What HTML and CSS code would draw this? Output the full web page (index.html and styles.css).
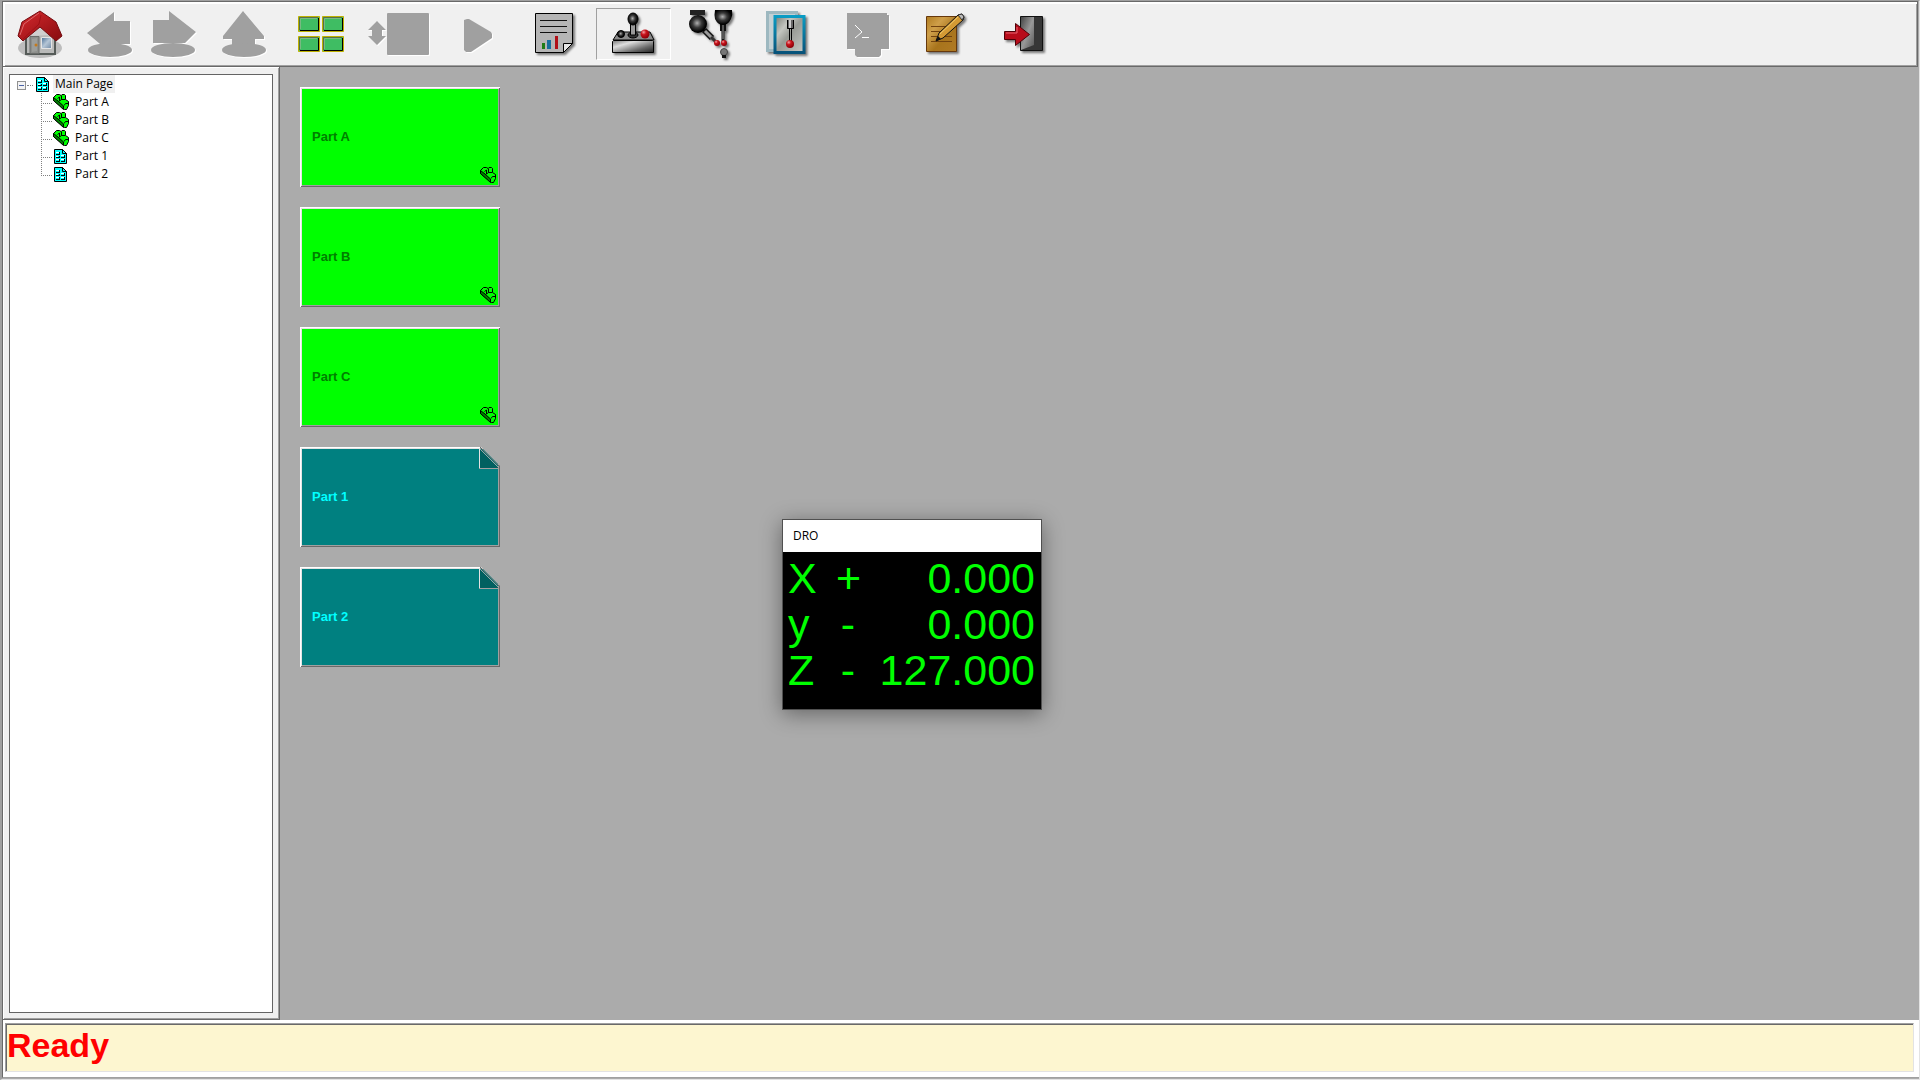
FILE: index.html
```
<!DOCTYPE html>
<html lang="en">

<head>
    <meta charset="UTF-8">
    <meta name="viewport" content="width=device-width, initial-scale=1.0">
    <title>Main Page</title>
    <link rel="stylesheet" href="styles.css">
</head>

<body>
    <!-- shared icons and gradients -->
    <svg class="defs" aria-hidden="true">
        <defs>
            <linearGradient id="roof" x1="0" y1="0" x2="1" y2="1">
                <stop offset="0" stop-color="#d82a2e" />
                <stop offset="1" stop-color="#860b0f" />
            </linearGradient>
            <linearGradient id="glass" x1="0" y1="0" x2="1" y2="1">
                <stop offset="0" stop-color="#4a6f96" />
                <stop offset="0.5" stop-color="#b5c6d6" />
                <stop offset="1" stop-color="#7089a4" />
            </linearGradient>
            <linearGradient id="metal" x1="0" y1="0" x2="1" y2="1">
                <stop offset="0" stop-color="#777" />
                <stop offset="0.3" stop-color="#ddd" />
                <stop offset="0.7" stop-color="#666" />
                <stop offset="1" stop-color="#222" />
            </linearGradient>
            <linearGradient id="panel" x1="0" y1="0" x2="1" y2="1">
                <stop offset="0" stop-color="#777b74" />
                <stop offset="0.3" stop-color="#c4c6c0" />
                <stop offset="0.5" stop-color="#989b95" />
                <stop offset="1" stop-color="#c8cac6" />
            </linearGradient>
            <linearGradient id="blue" x1="0" y1="0" x2="0" y2="1">
                <stop offset="0" stop-color="#0a9cc4" />
                <stop offset="1" stop-color="#07537a" />
            </linearGradient>
            <linearGradient id="gold" x1="0" y1="0" x2="1" y2="1">
                <stop offset="0" stop-color="#b07c20" />
                <stop offset="0.3" stop-color="#cf9f4a" />
                <stop offset="0.6" stop-color="#a8741c" />
                <stop offset="1" stop-color="#b07a24" />
            </linearGradient>
            <linearGradient id="door" x1="0" y1="0" x2="1" y2="1">
                <stop offset="0" stop-color="#444" />
                <stop offset="0.5" stop-color="#999" />
                <stop offset="1" stop-color="#555" />
            </linearGradient>
            <radialGradient id="ball" cx="0.45" cy="0.45" r="0.5">
                <stop offset="0" stop-color="#b0b0b0" />
                <stop offset="0.5" stop-color="#3a3a3a" />
                <stop offset="1" stop-color="#000" />
            </radialGradient>
            <radialGradient id="red" cx="0.35" cy="0.3" r="0.7">
                <stop offset="0" stop-color="#f4a0a4" />
                <stop offset="0.4" stop-color="#c8141c" />
                <stop offset="1" stop-color="#8c0008" />
            </radialGradient>
        </defs>
        <symbol id="page-icon" viewBox="0 0 13 15">
            <path d="M.5 .5h8l4 4v10h-12z" fill="#0ff" stroke="#000" />
            <path d="M8.500 .5v4h4z" fill="#0ff" stroke="#000" />
            <path d="M2 3h4v3H2zM2 7h4v2H2zM2 10h4v3H2zM7 6h4v3H7zM7 10h4v3H7z" fill="#000" />
            <path d="M2 3h3v2H2zM2 7h3v1H2zM2 10h3v2H2zM7 6h3v2H7zM7 10h3v2H7z" fill="#0ff" />
            <path d="M2 3h3v1H2zM2 7h2v1H2zM2 10h3v1H2zM7 6h3v1H7zM7 10h3v1H7z" fill="#fff" />
        </symbol>
        <symbol id="part-icon" viewBox="0 0 16 16">
            <path d="M.5 3.500l3-3h3l1.500 1 1-1h2.500l1 1v4l3 2v4l-2 4h-2L.5 6.500z" fill="#0f0" stroke="#000" />
            <path d="M.5 3.500L5 7l5.500 5v3.500L.5 6.500z" fill="#008000" stroke="#000" />
            <path d="M4.500 4.500l2-1.500v4M8.500 1.500v4l-2 1.500M8.500 5.500h3.500M11 11.500l1.500-2h2.500" fill="none" stroke="#000" />
        </symbol>
    </svg>

    <header class="toolbar">
        <nav class="nav-group">
            <button type="button" class="nav-btn" aria-label="Home">
                <svg viewBox="0 0 61 48">
                    <ellipse cx="30" cy="38" rx="22" ry="10" fill="#bdbdbd" />
                    <path d="M16 24L30 12l15 12v20H16z" fill="#b9bab9" stroke="#555b58" stroke-width="2" />
                    <path d="M19 26L30 16l11 9z" fill="#cfcfcf" />
                    <path d="M20 26.500h9v17h-9z" fill="#8d8f8c" stroke="#6a6c6a" />
                    <path d="M22 29l5-1v13l-5 1z" fill="#9c9e9b" />
                    <circle cx="26" cy="35" r="1.500" fill="#c47a1c" />
                    <path d="M31.500 27.500h10v11h-10z" fill="url(#glass)" stroke="#e4e4e4" />
                    <path d="M30 1l16 11 6 14-6 5L30 17 13 31l-5-5 4-14z" fill="url(#roof)" stroke="#740b10" stroke-linejoin="round" />
                    <path d="M29 3L14 14l-4 11" fill="none" stroke="#dc676a" />
                    <path d="M31 5l-2 9L13 29" fill="none" stroke="#a01015" />
                </svg>
            </button>
            <button type="button" class="nav-btn" aria-label="Back" disabled>
                <svg viewBox="0 0 61 48">
                    <path d="M7 23L34 2v9h16v23H20z" />
                    <ellipse cx="30" cy="40" rx="22" ry="7" />
                </svg>
            </button>
            <button type="button" class="nav-btn" aria-label="Forward" disabled>
                <svg viewBox="0 0 61 48">
                    <path d="M46 22L19 1v9H3v23h32z" />
                    <ellipse cx="23" cy="40" rx="22" ry="7" />
                </svg>
            </button>
            <button type="button" class="nav-btn" aria-label="Up" disabled>
                <svg viewBox="0 0 61 48">
                    <path d="M23 1L44 26v3h-9v8H12v-8H3v-3z" />
                    <ellipse cx="24" cy="40" rx="22" ry="7" />
                </svg>
            </button>
        </nav>
        <div class="tool-group">
            <button type="button" class="tool-btn" aria-label="Tile view">
                <svg viewBox="0 0 61 48">
                    <g fill="#3fbd63" stroke="#beb100">
                        <path d="M7.500 6.500h21v15h-21zM31.500 6.500h21v15h-21zM7.500 26.500h21v15h-21zM31.500 26.500h21v15h-21z" />
                    </g>
                    <path d="M8.500 20V7.500H27M32.500 20V7.500H51M8.500 40V27.500H27M32.500 40V27.500H51" fill="none" stroke="#55714b" />
                    <path d="M9.500 19V8.500H26M33.500 19V8.500H50M9.500 39V28.500H26M33.500 39V28.500H50" fill="none" stroke="#79b982" />
                    <path d="M9 20.500h18.500V8M33 20.500h18.500V8M9 40.500h18.500V28M33 40.500h18.500V28" fill="none" stroke="#000" />
                </svg>
            </button>
            <button type="button" class="tool-btn" aria-label="Resize" disabled>
                <svg viewBox="0 0 61 48">
                    <path d="M8 11l9 9h-4v6h4l-9 9-9-9h4v-6h-4z" />
                    <rect x="18" y="3" width="42" height="42" rx="1" />
                </svg>
            </button>
            <button type="button" class="tool-btn" aria-label="Run" disabled>
                <svg viewBox="0 0 61 48">
                    <path d="M17 10l3-1h2l22 13 1 2v4L24 42h-5l-2-2z" />
                </svg>
            </button>
            <button type="button" class="tool-btn" aria-label="Report">
                <svg class="shadow" viewBox="0 0 61 48">
                    <path d="M10.500 3.500h37v30l-9 9h-28z" fill="#b5b5b5" stroke="#000" />
                    <path d="M15 10.500h27M15 16.500h27M15 22.500h27" stroke="#111" />
                    <path d="M38.500 42.500v-9h9z" fill="#e5e5e5" stroke="#000" />
                    <path d="M17 33h3v6h-3z" fill="#1f7c16" />
                    <path d="M22 30h4v9h-4z" fill="#176f9d" />
                    <path d="M30 26h3v13h-3z" fill="#b01018" />
                </svg>
            </button>
            <button type="button" class="tool-btn pressed" aria-label="Joystick" aria-pressed="true">
                <svg class="shadow" viewBox="0 0 61 48">
                    <path d="M15 22h32l4 8H10z" fill="#8a8a8a" stroke="#000" />
                    <path d="M9.500 31.500l1-1h39l1 1v11h-41z" fill="url(#metal)" stroke="#000" />
                    <ellipse cx="30" cy="25" rx="5" ry="3" fill="#333" stroke="#000" />
                    <path d="M27.500 13h5v12h-5z" fill="#999" stroke="#000" />
                    <ellipse cx="30" cy="9" rx="5" ry="6" fill="url(#ball)" stroke="#000" />
                    <circle cx="18" cy="24" r="3.500" fill="url(#ball)" stroke="#000" />
                    <circle cx="42" cy="24" r="4.500" fill="url(#red)" />
                </svg>
            </button>
            <button type="button" class="tool-btn" aria-label="Probes">
                <svg class="shadow" viewBox="0 0 61 48">
                    <path d="M9 0h15v5H9z" fill="#222" />
                    <path d="M23 20l8 8" stroke="#111" stroke-width="6" />
                    <path d="M24 21l7 7" stroke="#999" stroke-width="3" />
                    <path d="M30 27l6 6" stroke="#333" stroke-width="3" />
                    <path d="M42 12v20" stroke="#111" stroke-width="3" />
                    <path d="M42 14v7" stroke="#111" stroke-width="6" />
                    <path d="M42 14v15" stroke="#999" />
                    <circle cx="17" cy="14" r="9" fill="url(#ball)" />
                    <path d="M34 0h17q1 5-1 9-3 6-8 6t-8-6Q33 5 34 0z" fill="url(#ball)" />
                    <circle cx="36" cy="33" r="3" fill="url(#red)" />
                    <circle cx="43" cy="33" r="3" fill="url(#red)" />
                    <circle cx="43" cy="42" r="3.500" fill="#777" stroke="#444" />
                    <path d="M41 45h4v3h-4z" fill="#111" />
                </svg>
            </button>
            <button type="button" class="tool-btn" aria-label="Probe window">
                <svg class="shadow" viewBox="0 0 61 48">
                    <path d="M8.500 2.500h29v38h-29z" fill="#c3d0d4" stroke="#9db8c0" stroke-width="3" />
                    <path d="M16 6.500h29v36H16z" fill="url(#panel)" stroke="url(#blue)" stroke-width="3" />
                    <path d="M28 10h7v9h-7z" fill="#666" />
                    <path d="M30 10h2v8h-2z" fill="#ccc" />
                    <path d="M28.500 10v8.500h6V10M30.500 19v12M32.500 19v12" fill="none" stroke="#000" />
                    <circle cx="31" cy="34" r="4" fill="url(#red)" />
                </svg>
            </button>
            <button type="button" class="tool-btn" aria-label="Console" disabled>
                <svg viewBox="0 0 61 48">
                    <path d="M10 3h40v2h2v34h-8v6l-2 2H20l-2-2v-6h-8z" />
                    <path class="prompt" d="M18 15l7 7-7 6M25 27.500h7" />
                </svg>
            </button>
            <button type="button" class="tool-btn" aria-label="Notes">
                <svg class="shadow" viewBox="0 0 61 48">
                    <path d="M11.500 6.500h30v35h-30z" fill="url(#gold)" stroke="#66380c" />
                    <path d="M16 16.500h20M16 21.500h17M16 26.500h21M16 31.500h21" stroke="#71420f" />
                    <path d="M21 31l3-8L43 5l4-1 2 3-1 3-20 18z" fill="#d49a34" stroke="#111" stroke-linejoin="round" />
                    <path d="M25 24L43 7" stroke="#efc868" />
                    <path d="M43 5l4-1 2 3-2 3z" fill="#bbb" stroke="#333" />
                    <path d="M21 31l2-5 3 3z" fill="#111" />
                </svg>
            </button>
            <button type="button" class="tool-btn" aria-label="Exit">
                <svg class="shadow" viewBox="0 0 61 48">
                    <path d="M27.500 6.500h22v34h-22z" fill="#363636" stroke="#111" />
                    <path d="M28 7h13v28l-13 5z" fill="url(#door)" />
                    <path d="M11.500 21.500h11v-8l14 11-14 11v-6h-11z" fill="#b80c1a" stroke="#500006" />
                    <path d="M13 23h11v-6" fill="none" stroke="#e66570" />
                </svg>
            </button>
        </div>
    </header>

    <main class="workspace">
        <aside class="side">
            <ul class="tree">
                <li class="row root">
                    <button type="button" class="toggle" aria-label="Collapse"></button>
                    <span class="dots"></span>
                    <svg class="page-icon"><use href="#page-icon" /></svg>
                    <span class="label selected">Main Page</span>
                </li>
                <li class="row child">
                    <svg class="branch" viewBox="0 0 12 18"><path d="M.5 0v18M2 10.500h10" /></svg>
                    <svg class="part-icon"><use href="#part-icon" /></svg>
                    <span class="label">Part A</span>
                </li>
                <li class="row child">
                    <svg class="branch" viewBox="0 0 12 18"><path d="M.5 0v18M2 10.500h10" /></svg>
                    <svg class="part-icon"><use href="#part-icon" /></svg>
                    <span class="label">Part B</span>
                </li>
                <li class="row child">
                    <svg class="branch" viewBox="0 0 12 18"><path d="M.5 0v18M2 10.500h10" /></svg>
                    <svg class="part-icon"><use href="#part-icon" /></svg>
                    <span class="label">Part C</span>
                </li>
                <li class="row child">
                    <svg class="branch" viewBox="0 0 12 18"><path d="M.5 0v18M2 10.500h10" /></svg>
                    <span class="icon-cell"><svg class="page-icon"><use href="#page-icon" /></svg></span>
                    <span class="label">Part 1</span>
                </li>
                <li class="row child">
                    <svg class="branch" viewBox="0 0 12 18"><path d="M.5 0v11M2 10.500h10" /></svg>
                    <span class="icon-cell"><svg class="page-icon"><use href="#page-icon" /></svg></span>
                    <span class="label">Part 2</span>
                </li>
            </ul>
        </aside>

        <section class="cards">
            <button type="button" class="card part">Part A<svg class="part-icon"><use href="#part-icon" /></svg></button>
            <button type="button" class="card part">Part B<svg class="part-icon"><use href="#part-icon" /></svg></button>
            <button type="button" class="card part">Part C<svg class="part-icon"><use href="#part-icon" /></svg></button>
            <button type="button" class="card folder">Part 1
                <svg class="fold" viewBox="0 0 21 22">
                    <path d="M2 0h19v19z" fill="#ababab" />
                    <path d="M1 1v20h19z" fill="#006060" />
                    <path d="M.5 1v21" stroke="#e3e3e3" />
                    <path d="M0 21.500h20M1 2l19 19" stroke="#a0a0a0" />
                    <path d="M1 0l20 20" stroke="#696969" />
                </svg>
            </button>
            <button type="button" class="card folder">Part 2
                <svg class="fold" viewBox="0 0 21 22">
                    <path d="M2 0h19v19z" fill="#ababab" />
                    <path d="M1 1v20h19z" fill="#006060" />
                    <path d="M.5 1v21" stroke="#e3e3e3" />
                    <path d="M0 21.500h20M1 2l19 19" stroke="#a0a0a0" />
                    <path d="M1 0l20 20" stroke="#696969" />
                </svg>
            </button>
        </section>

        <!-- floating position readout -->
        <section class="dro">
            <h2 class="dro-title">DRO</h2>
            <div class="dro-body">
                <div class="axis"><span class="name">X</span><span class="sign">+</span><span class="value">0.000</span></div>
                <div class="axis"><span class="name">y</span><span class="sign">-</span><span class="value">0.000</span></div>
                <div class="axis"><span class="name">Z</span><span class="sign">-</span><span class="value">127.000</span></div>
            </div>
        </section>
    </main>

    <footer class="status">
        <div class="status-text">Ready</div>
    </footer>
</body>

</html>
```
FILE: styles.css
```
* {
    box-sizing: border-box;
}

body {
    margin: 0;
    height: 100vh;
    display: flex;
    flex-direction: column;
    background-color: #ababab;
    border: 1px solid #a0a0a0;
    border-left-width: 2px;
    border-right-color: #e3e3e3;
    border-bottom-color: #e3e3e3;
    font-family: "Open Sans", "Noto Sans", sans-serif;
    font-size: 12px;
    overflow: hidden;
}

button {
    margin: 0;
    padding: 0;
    border: 0;
    background: none;
    font: inherit;
}

svg {
    display: block;
    flex: none;
    overflow: visible;
}

.defs {
    position: absolute;
    width: 0;
    height: 0;
}

/* toolbar */
.toolbar {
    flex: none;
    display: flex;
    align-items: center;
    gap: 3px;
    height: 66px;
    padding-left: 7px;
    margin-right: 1px;
    background-color: #f0f0f0;
    border: 1px solid #696969;
    box-shadow: inset 2px 2px #fff, inset -1px -1px #a0a0a0;
}

.nav-group {
    display: flex;
    gap: 9px;
}

.tool-group {
    display: flex;
    gap: 3px;
}

.nav-btn {
    width: 61px;
    height: 52px;
    padding: 2px 0;
}

.tool-btn {
    width: 75px;
    height: 52px;
    padding: 1px 6px;
    border: 1px solid transparent;
}

.pressed {
    border-color: #a0a0a0 #fff #fff #a0a0a0;
}

.toolbar svg {
    width: 61px;
    height: 48px;
}

.shadow {
    filter: drop-shadow(2px 2px 1px rgba(0, 0, 0, 0.5));
}

button:disabled svg {
    fill: #a0a0a0;
    filter: drop-shadow(1px 1px 0 #fff);
}

.prompt {
    fill: none;
    stroke: #fff;
}

/* middle area */
.workspace {
    flex: 1;
    min-height: 0;
    display: flex;
    position: relative;
}

.side {
    flex: none;
    width: 278px;
    display: flex;
    padding: 7px 6px 6px 6px;
    background-color: #f0f0f0;
    border: 1px solid #696969;
    border-top: 0;
    box-shadow: inset 1px 1px #fff, inset -1px -1px #a0a0a0;
}

.tree {
    flex: 1;
    margin: 0;
    padding: 0;
    list-style: none;
    background-color: #fff;
    border: 1px solid #646464;
}

.row {
    display: flex;
    align-items: center;
    height: 18px;
}

.root {
    padding-left: 7px;
}

.child {
    padding-left: 31px;
}

.toggle {
    width: 9px;
    height: 9px;
    margin-top: 2px;
    border: 1px solid #919191;
    background: linear-gradient(#4b63a7, #4b63a7) center / 5px 1px no-repeat #f3f3f3;
}

.dots {
    width: 6px;
    margin: 2px 3px 0 1px;
    border-top: 1px dotted #808080;
}

.page-icon {
    width: 13px;
    height: 15px;
}

.part-icon {
    width: 16px;
    height: 16px;
}

.branch {
    width: 12px;
    height: 18px;
    fill: none;
    stroke: #808080;
    stroke-dasharray: 1 1;
}

.icon-cell {
    width: 16px;
    padding-left: 1px;
}

.label {
    height: 18px;
    margin-left: 4px;
    padding: 0 2px;
    line-height: 18px;
}

.selected {
    background-color: #f0f0f0;
}

/* cards */
.cards {
    display: flex;
    flex-direction: column;
    gap: 20px;
    padding: 20px;
}

.card {
    position: relative;
    width: 200px;
    height: 100px;
    padding: 0 12px 2px;
    font: bold 13px "Liberation Sans", Arial, sans-serif;
    text-align: left;
    box-shadow: inset 1px 1px #fff, inset -1px -1px #696969, inset 2px 2px #e3e3e3, inset -2px -2px #a0a0a0;
}

.part {
    background-color: #0f0;
    color: #008000;
}

.folder {
    background-color: #008080;
    color: #0ff;
}

.card .part-icon {
    position: absolute;
    right: 4px;
    bottom: 4px;
}

.fold {
    position: absolute;
    top: 0;
    right: 0;
    width: 21px;
    height: 22px;
}

/* DRO window */
.dro {
    position: absolute;
    left: 780px;
    top: 452px;
    width: 260px;
    border: 1px solid #505050;
    background-color: #000;
    box-shadow: 0 4px 20px rgba(0, 0, 0, 0.4);
}

.dro-title {
    margin: 0;
    padding-left: 10px;
    background-color: #fff;
    font-size: 12px;
    font-weight: normal;
    line-height: 32px;
}

.dro-body {
    padding: 3px 6px 16px 5px;
    color: #0f0;
    font: 43px/46px "Liberation Sans", Arial, sans-serif;
}

.axis {
    display: flex;
}

.name {
    width: 48px;
}

.sign {
    width: 24px;
    text-align: center;
}

.value {
    flex: 1;
    text-align: right;
}

/* status bar */
.status {
    flex: none;
    padding: 3px 5px 5px 2px;
    background-color: #fff;
    border-bottom: 1px solid #a0a0a0;
    border-left: 1px solid #696969;
    margin-bottom: 1px;
}

.status-text {
    height: 49px;
    padding-left: 1px;
    background-color: #fdf6d0;
    border: 1px solid #a0a0a0;
    border-right-color: #e3e3e3;
    border-bottom-color: #e3e3e3;
    box-shadow: inset 1px 1px #696969;
    color: #f00;
    font: bold 34px/42px "Liberation Sans", Arial, sans-serif;
}
```
